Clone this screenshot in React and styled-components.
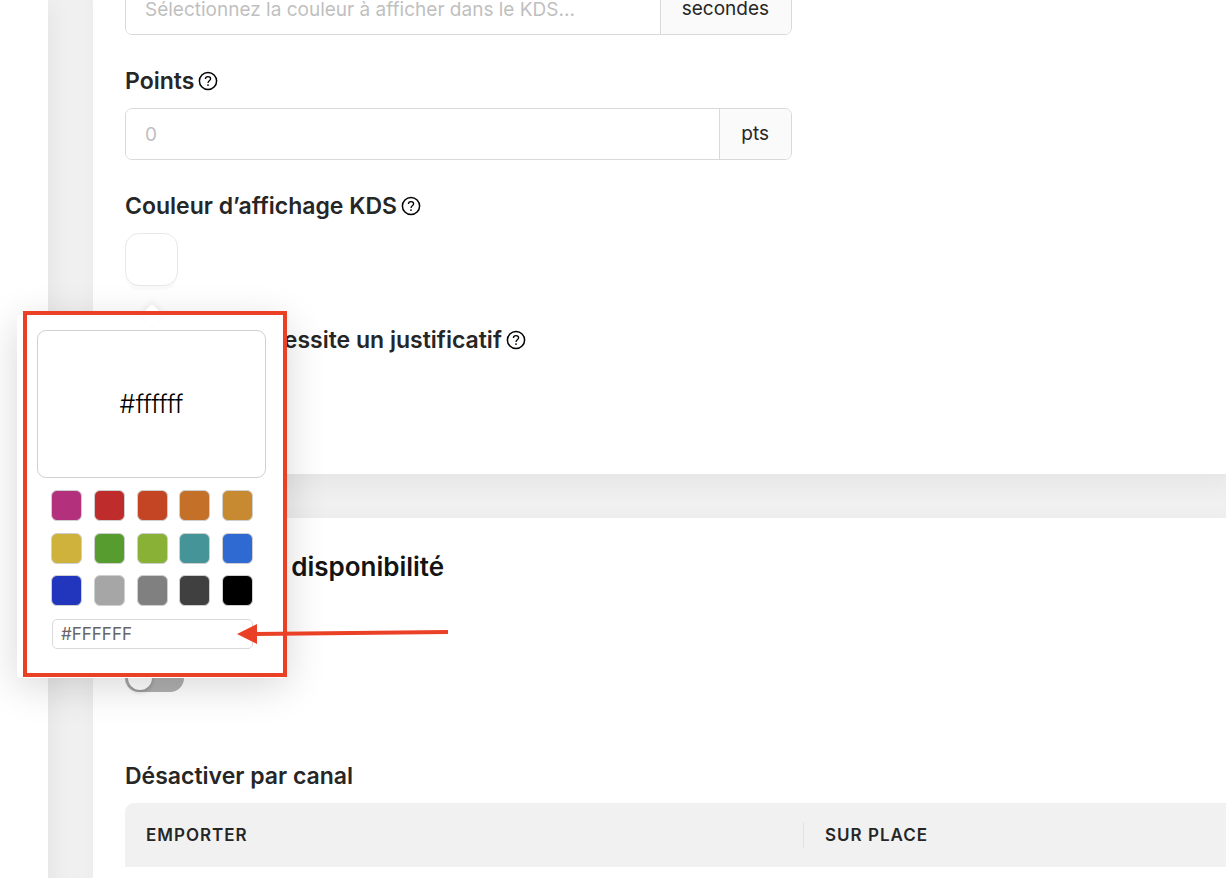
import React, { useState } from 'react';
import styled, { createGlobalStyle } from 'styled-components';

const GlobalStyle = createGlobalStyle`
  * {
    box-sizing: border-box;
  }

  body {
    margin: 0;
    background: #f0f0f1;
    color: #262626;
    font-family: Inter, sans-serif;
    overflow: hidden;
  }

  button,
  input {
    font-family: inherit;
  }
`;

const PALETTE = [
  { name: 'Magenta', value: '#b3307c' },
  { name: 'Rouge', value: '#be2d2c' },
  { name: 'Vermillon', value: '#c44523' },
  { name: 'Orange', value: '#c57029' },
  { name: 'Ambre', value: '#c78a30' },
  { name: 'Jaune', value: '#ceb23b' },
  { name: 'Vert', value: '#579c2f' },
  { name: 'Citron vert', value: '#89b135' },
  { name: 'Turquoise', value: '#449498' },
  { name: 'Bleu', value: '#2f6ad2' },
  { name: 'Indigo', value: '#2236bd' },
  { name: 'Gris clair', value: '#a6a6a6' },
  { name: 'Gris', value: '#808080' },
  { name: 'Anthracite', value: '#404040' },
  { name: 'Noir', value: '#000000' },
];

const Page = styled.div`
  display: grid;
  grid-template-columns: 48px minmax(0, 1fr);
  column-gap: 45px;
  height: 100vh;
`;

const SidePanel = styled.aside`
  background: white;
  box-shadow: 4px 4px 24px rgba(0, 0, 0, 0.05);
`;

const Main = styled.main`
  display: flex;
  flex-direction: column;
  gap: 44px;
  margin-top: -17px;
`;

const Card = styled.section`
  padding: ${(props) => props.$padding};
  background: white;
  box-shadow: 8px 8px 24px rgba(0, 0, 0, 0.05);
`;

const Fields = styled.div`
  display: flex;
  flex-direction: column;
  gap: 32px;
  max-width: 667px;
`;

const Field = styled.div`
  display: flex;
  flex-direction: column;
  gap: 13px;
`;

const LabelRow = styled.div`
  display: flex;
  align-items: center;
  gap: 4px;
  height: 28px;
`;

const Label = styled.label`
  font-size: 23px;
  font-weight: 600;
  line-height: 28px;
  white-space: nowrap;
`;

const HelpButton = styled.button`
  display: flex;
  padding: 0;
  border: none;
  background: none;
  color: black;
`;

const InputGroup = styled.div`
  display: flex;
  height: 52px;
  border: 1px solid #d9d9d9;
  border-radius: 7px;
  overflow: hidden;
`;

const GroupInput = styled.input`
  flex: 1;
  min-width: 0;
  padding: 0 19px;
  border: none;
  outline: none;
  background: white;
  font-size: 19px;

  &::placeholder {
    color: #bfbfbf;
    opacity: 1;
  }
`;

const Addon = styled.span`
  display: flex;
  align-items: center;
  padding: 0 22px 0 21px;
  border-left: 1px solid #d9d9d9;
  background: #fafafa;
  font-size: 19px;
  line-height: 16px;
`;

const ColorPicker = styled.div`
  position: relative;
  width: 53px;
  height: 61px;
`;

const CurrentColor = styled.button`
  display: block;
  width: 53px;
  height: 53px;
  border: 1px solid #e8e8e8;
  border-radius: 14px;
  background: white;
  box-shadow: 0 5px 0 -1px #fafafa;
`;

/* Hangs under the colour button, centred on it */
const Popover = styled.div`
  position: absolute;
  z-index: 2;
  top: 82px;
  left: -108px;
  width: 270px;
  padding: 15px 21px 29px 20px;
  border-radius: 4px;
  background: white;
  box-shadow: 0 8px 40px rgba(0, 0, 0, 0.16);

  &::before {
    content: '';
    position: absolute;
    top: -8px;
    left: 50%;
    width: 16px;
    height: 16px;
    transform: translateX(-50%) rotate(45deg);
    border-radius: 3px;
    background: white;
    box-shadow: -2px -2px 6px rgba(0, 0, 0, 0.06);
  }
`;

const Preview = styled.div`
  position: relative;
  display: flex;
  align-items: center;
  justify-content: center;
  height: 148px;
  border: 1px solid #d0d0d0;
  border-radius: 9px;
  background: white;
  color: black;
  font-size: 25px;
  font-weight: 300;
`;

const Swatches = styled.div`
  display: grid;
  grid-template-columns: repeat(5, 31px);
  align-content: space-between;
  justify-content: space-between;
  height: 116px;
  margin: 12px 13px 13px 14px;
`;

const Swatch = styled.button`
  height: 31px;
  padding: 0;
  border: 1px solid #cfcfcf;
  border-radius: 6px;
  background: ${(props) => props.$color};
`;

const HexInput = styled.input`
  display: block;
  width: 201px;
  height: 30px;
  margin-left: 15px;
  padding: 0 8px;
  border: 1px solid #d9d9d9;
  border-radius: 5px;
  outline: none;
  color: #666;
  font-size: 17px;
`;

const Frame = styled.div`
  position: absolute;
  top: -4px;
  right: 0;
  bottom: 1px;
  left: 6px;
  border: 4px solid #ea4025;
  pointer-events: none;
`;

const Arrow = styled.svg`
  position: absolute;
  top: 309px;
  left: 220px;
  pointer-events: none;
`;

const Title = styled.h2`
  margin: 0 0 81px;
  color: #141414;
  font-size: 26px;
  font-weight: 600;
  line-height: 32px;
  white-space: nowrap;
`;

const Toggle = styled.input`
  appearance: none;
  display: block;
  width: 59px;
  height: 28px;
  margin: 0 0 70px;
  padding: 2px 3px;
  border-radius: 14px;
  background: #b0b0b0;

  &::before {
    content: '';
    display: block;
    width: 24px;
    height: 24px;
    border-radius: 50%;
    background: white;
    box-shadow: 0 2px 4px rgba(0, 0, 0, 0.2);
  }
`;

const TableContainer = styled.div`
  overflow: hidden;
  border-radius: 9px 0 0 0;
`;

const ChannelTable = styled.table`
  width: 1356px;
  table-layout: fixed;
  border-collapse: collapse;
  background: #f1f1f1;
`;

const TableHeading = styled.th`
  height: 64px;
  padding: 0;
  font-size: 17px;
  font-weight: 600;
  letter-spacing: 1px;
  text-align: left;
  text-transform: uppercase;

  span {
    display: block;
    padding-left: 21px;
    line-height: 26px;
  }

  & + & span {
    border-left: 1px solid #e3e3e3;
  }
`;

const Help = () => (
  <HelpButton type="button" aria-label="Aide">
    <svg width="20" height="20" viewBox="0 0 20 20" fill="none" stroke="currentColor">
      <circle cx="10" cy="10" r="8.6" strokeWidth="1.5" />
      <path
        d="M7.4 8c0-1.5 1.1-2.4 2.6-2.4s2.6.9 2.6 2.2c0 1.9-2.5 2-2.5 3.8v.4"
        strokeWidth="1.3"
      />
      <circle cx="10" cy="14.1" r="0.9" fill="currentColor" stroke="none" />
    </svg>
  </HelpButton>
);

const App = () => {
  const [color, setColor] = useState('#ffffff');

  return (
    <>
      <GlobalStyle />
      <Page>
        <SidePanel />
        <Main>
          <Card $padding="0 32px 120px">
            <Fields>
              <InputGroup>
                <GroupInput
                  aria-label="Temps de préparation"
                  placeholder="Sélectionnez la couleur à afficher dans le KDS..."
                />
                <Addon>secondes</Addon>
              </InputGroup>

              <Field>
                <LabelRow>
                  <Label htmlFor="points">Points</Label>
                  <Help />
                </LabelRow>
                <InputGroup>
                  <GroupInput id="points" placeholder="0" />
                  <Addon>pts</Addon>
                </InputGroup>
              </Field>

              <Field>
                <LabelRow>
                  <Label htmlFor="kds-color">Couleur d’affichage KDS</Label>
                  <Help />
                </LabelRow>
                <ColorPicker>
                  <CurrentColor id="kds-color" type="button" />
                  <Popover>
                    <Preview>{color}</Preview>
                    <Swatches>
                      {PALETTE.map(({ name, value }) => (
                        <Swatch
                          key={value}
                          type="button"
                          aria-label={name}
                          $color={value}
                          onClick={() => setColor(value)}
                        />
                      ))}
                    </Swatches>
                    <HexInput
                      aria-label="Code couleur"
                      value={color.toUpperCase()}
                      onChange={(e) => setColor(e.target.value.toLowerCase())}
                    />
                    <Frame />
                    <Arrow width="212" height="22" viewBox="0 0 212 22">
                      <path d="M18 8L211 6v4L18 12z" fill="#ea4025" />
                      <path d="M0 10L20 0v20z" fill="#ea4025" />
                    </Arrow>
                  </Popover>
                </ColorPicker>
              </Field>

              <LabelRow>
                <Label as="span">Le produit nécessite un justificatif</Label>
                <Help />
              </LabelRow>
            </Fields>
          </Card>

          <Card $padding="33px 0 32px 32px">
            <Title>Créneaux de disponibilité</Title>
            <Toggle type="checkbox" role="switch" aria-label="Disponibilité" />
            <Field>
              <LabelRow>
                <Label as="span">Désactiver par canal</Label>
              </LabelRow>
              <TableContainer>
                <ChannelTable>
                  <thead>
                    <tr>
                      <TableHeading>
                        <span>Emporter</span>
                      </TableHeading>
                      <TableHeading>
                        <span>Sur place</span>
                      </TableHeading>
                    </tr>
                  </thead>
                </ChannelTable>
              </TableContainer>
            </Field>
          </Card>
        </Main>
      </Page>
    </>
  );
};

export default App;
